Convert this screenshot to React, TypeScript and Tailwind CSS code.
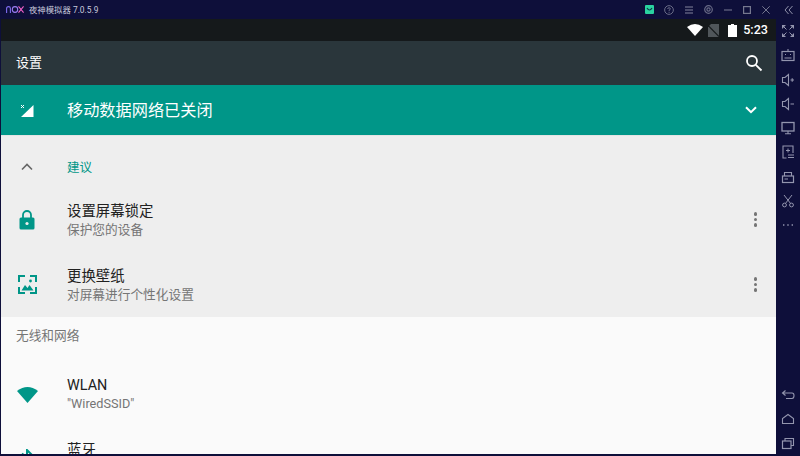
import React from "react";

const CJK = "font-['Roboto','Noto_Sans_CJK_SC',sans-serif]";

function S({ children, size = 14, vb = 14 }: { children: React.ReactNode; size?: number; vb?: number }) {
  return (
    <svg width={size} height={size} viewBox={`0 0 ${vb} ${vb}`} fill="none" stroke="#9395ae" strokeWidth="1.2">
      {children}
    </svg>
  );
}

function TitleIcons() {
  return (
    <div className="flex items-center h-full">
      <div className="w-[19.4px] flex justify-center">
        <svg width="9" height="9" viewBox="0 0 9 9">
          <rect width="9" height="9" rx="1" fill="#2ad2a0" />
          <path d="M2 3 Q4.5 7 7 3" stroke="#0f3a4a" strokeWidth="1.2" fill="none" />
        </svg>
      </div>
      <div className="w-[19.4px] flex justify-center">
        <S size={10} vb={11}>
          <circle cx="5.5" cy="5.5" r="4.8" strokeWidth="1" stroke="#74768f" />
          <path d="M4 4.4 Q4.2 3 5.6 3 Q7 3.2 7 4.3 Q7 5 5.6 5.8 V6.8 M5.6 7.6 V8.6" strokeWidth="1" stroke="#74768f" />
        </S>
      </div>
      <div className="w-[19.4px] flex justify-center">
        <S size={8} vb={8}>
          <path d="M0 1 H8 M0 4 H8 M0 7 H8" strokeWidth="1.3" stroke="#5c5e7c" />
        </S>
      </div>
      <div className="w-[19.4px] flex justify-center">
        <S size={9} vb={9}>
          <circle cx="4.5" cy="4.5" r="3.8" strokeWidth="1.2" stroke="#686a86" />
          <circle cx="4.5" cy="4.5" r="1.6" strokeWidth="1.2" stroke="#686a86" />
        </S>
      </div>
      <div className="w-[19.4px] flex justify-center">
        <S size={8} vb={8}>
          <path d="M0 4 H8" strokeWidth="1.4" stroke="#5c5e7c" />
        </S>
      </div>
      <div className="w-[19.4px] flex justify-center">
        <S size={8} vb={8}>
          <rect x="0.6" y="0.6" width="6.8" height="6.8" strokeWidth="1.2" stroke="#76788f" />
        </S>
      </div>
      <div className="w-[19.4px] flex justify-center">
        <S size={8} vb={8}>
          <path d="M0.3 0.3 L7.7 7.7 M7.7 0.3 L0.3 7.7" strokeWidth="1" stroke="#74768f" />
        </S>
      </div>
      <div className="w-[22px] ml-[2px] flex justify-center">
        <S size={10} vb={10}>
          <path d="M4.5 1 L1 5 L4.5 9 M8.5 1 L5 5 L8.5 9" strokeWidth="1" stroke="#8f91aa" />
        </S>
      </div>
    </div>
  );
}

const sideIcons: React.ReactNode[] = [
  <>
    <path d="M1 1 H5 L1 5 Z M13 1 H9 L13 5 Z M1 13 H5 L1 9 Z M13 13 H9 L13 9 Z" fill="#9395ae" stroke="none" />
    <path d="M3 3 L5.5 5.5 M11 3 L8.5 5.5 M3 11 L5.5 8.5 M11 11 L8.5 8.5" strokeWidth="1" />
  </>,
  <>
    <rect x="1" y="3.5" width="12" height="9" strokeWidth="1.2" />
    <path d="M7 1 V3.5 M3.5 10 H10.5 M4 6.5 H5 M9 6.5 H10" strokeWidth="1.1" />
  </>,
  <path d="M1.5 4.5 H4 L7.5 1.5 V12.5 L4 9.5 H1.5 Z M9.5 7 H13 M11.2 5.2 V8.8" strokeWidth="1.1" />,
  <path d="M1.5 4.5 H4 L7.5 1.5 V12.5 L4 9.5 H1.5 Z M9.5 7 H13" strokeWidth="1.1" />,
  <>
    <rect x="1" y="1.5" width="12" height="8.5" strokeWidth="1.3" />
    <path d="M7 10 V12.5 M4 12.7 H10" strokeWidth="1.1" />
  </>,
  <>
    <path d="M5.5 13 H2 V1 H12 V8" strokeWidth="1.1" />
    <path d="M7 3.5 V7.5 M5 5.5 H9 M7 10 H13 M7 12.5 H13" strokeWidth="1" />
  </>,
  <>
    <rect x="1.5" y="6" width="11" height="6.5" strokeWidth="1.2" />
    <path d="M3.5 6 V2.5 H10.5 V6 M3.5 9 H7" strokeWidth="1.1" />
  </>,
  <>
    <circle cx="3.5" cy="11" r="1.9" strokeWidth="1" />
    <circle cx="10.5" cy="11" r="1.9" strokeWidth="1" />
    <path d="M4.5 9.4 L11 1 M9.5 9.4 L3 1" strokeWidth="1" />
  </>,
  <path d="M2 7 H3.4 M6.3 7 H7.7 M10.6 7 H12" strokeWidth="1.4" />,
];

const navIcons: React.ReactNode[] = [
  <path d="M4.5 2.5 L1.5 5 L4.5 7.5 M1.5 5 H11 Q13 5 13 7.5 Q13 10.5 11 10.5 H5" strokeWidth="1.1" />,
  <path d="M1.5 11.5 V6.5 L7 2.5 L12.5 6.5 V11.5 Z" strokeWidth="1.1" />,
  <>
    <rect x="1.5" y="5" width="8.5" height="7.5" strokeWidth="1.2" />
    <path d="M4 5 V2.5 H12.5 V9.5 H10" strokeWidth="1.1" />
  </>,
];

function Sidebar() {
  return (
    <div className="w-[24px] flex flex-col justify-between pb-[1px]">
      <div className="flex flex-col">
        {sideIcons.map((p, i) => (
          <div key={i} className="h-[24.25px] flex items-center justify-center">
            <S>{p}</S>
          </div>
        ))}
      </div>
      <div className="flex flex-col">
        {navIcons.map((p, i) => (
          <div key={i} className="h-[24px] flex items-center justify-center">
            <S>{p}</S>
          </div>
        ))}
      </div>
    </div>
  );
}

function Dots() {
  return (
    <div className="w-[3.5px] flex flex-col gap-[2px] mr-[19px]">
      <span className="h-[3.5px] rounded-full bg-[#757575]" />
      <span className="h-[3.5px] rounded-full bg-[#757575]" />
      <span className="h-[3.5px] rounded-full bg-[#757575]" />
    </div>
  );
}

function Row({
  icon,
  title,
  sub,
  dots,
  h = "h-[65px]",
}: {
  icon: React.ReactNode;
  title: string;
  sub?: string;
  dots?: boolean;
  h?: string;
}) {
  return (
    <div className={`${h} flex items-center shrink-0`}>
      <div className="w-[66px] pl-[15px] shrink-0 flex items-center">{icon}</div>
      <div className="flex-1 flex flex-col">
        <span className="text-[14.4px] leading-[19px] text-[#212121]">{title}</span>
        {sub && <span className="text-[12.7px] leading-[17px] text-[#757575]">{sub}</span>}
      </div>
      {dots && <Dots />}
    </div>
  );
}

export default function App() {
  return (
    <div className={`w-[800px] h-[456px] bg-[#0e0f3a] flex flex-col overflow-hidden ${CJK}`}>
      <div className="h-[19px] flex items-center justify-between shrink-0">
        <div className="flex items-center">
          <svg className="ml-[6px]" width="18" height="7" viewBox="0 0 18 7" fill="none" strokeWidth="1.1">
            <path d="M0.6 7 V2.5 Q0.6 0.6 2.5 0.6 Q4.4 0.6 4.4 2.5 V7" stroke="#7f6cf0" />
            <ellipse cx="9" cy="3.5" rx="2.7" ry="2.9" stroke="#9a7cf0" />
            <path d="M12.5 0.4 L17.6 6.6 M17.6 0.4 L12.5 6.6" stroke="#f060c8" />
          </svg>
          <span className="ml-[5px] mt-[1px] text-[8.4px] leading-none text-[#c8c9dc]">夜神模拟器 7.0.5.9</span>
        </div>
        <TitleIcons />
      </div>
      <div className="flex-1 flex min-h-0">
        <div className="ml-[1px] mb-[2px] w-[775px] flex flex-col overflow-hidden bg-[#fafafa]">
          <div className="h-[22px] shrink-0 bg-[#15191b] flex items-center justify-end pr-[8px]">
            <svg width="16" height="12" viewBox="0 0 16 12" className="mr-[5px]">
              <path d="M0 3 Q8 -3 16 3 L8 12 Z" fill="#fff" />
            </svg>
            <svg width="11" height="13" viewBox="0 0 11 13" className="mr-[9px]">
              <path d="M3 0 H11 V13 H0 V3 Z" fill="#50565a" />
              <path d="M0 1.5 L11 12.5" stroke="#15191b" strokeWidth="1.2" />
            </svg>
            <svg width="9" height="13" viewBox="0 0 9 13" className="mr-[6px]">
              <path d="M3 0 H6 V1 H9 V13 H0 V1 H3 Z" fill="#fff" />
            </svg>
            <span className="text-[12.6px] font-medium leading-none text-white">5:23</span>
          </div>
          <div className="h-[44px] shrink-0 bg-[#2a363b] flex items-center justify-between pl-[15px] pr-[13px]">
            <span className="text-[13px] text-white">设置</span>
            <svg width="18" height="18" viewBox="0 0 18 18" fill="none" stroke="#fff" strokeWidth="1.8">
              <circle cx="7" cy="7" r="5" />
              <path d="M10.8 10.8 L16.5 16.5" />
            </svg>
          </div>
          <div className="h-[50px] shrink-0 bg-[#009688] flex items-center">
            <div className="w-[66px] pl-[19px] shrink-0 pt-[1px]">
              <svg width="14" height="14" viewBox="0 0 14 14">
                <path d="M13.5 1 V13 H1 Z" fill="#fff" />
                <path d="M1 1 L4 4 M4 1 L1 4" stroke="#fff" strokeWidth="1" />
              </svg>
            </div>
            <span className="flex-1 pt-[3px] text-[16.2px] text-white">移动数据网络已关闭</span>
            <svg width="12" height="8" viewBox="0 0 12 8" fill="none" stroke="#fff" strokeWidth="2" className="mr-[19px]">
              <path d="M1 1.2 L6 6.2 L11 1.2" />
            </svg>
          </div>
          <div className="h-[182px] shrink-0 bg-[#eeeeee] flex flex-col border-t border-[#e4e4e4]">
            <div className="h-[51px] shrink-0 flex items-center pt-[10px]">
              <div className="w-[66px] pl-[20px] shrink-0">
                <svg width="12" height="8" viewBox="0 0 12 8" fill="none" stroke="#666" strokeWidth="1.6">
                  <path d="M1 6.5 L6 1.5 L11 6.5" />
                </svg>
              </div>
              <span className="pt-[3px] text-[12.5px] text-[#009688]">建议</span>
            </div>
            <Row
              icon={
                <svg width="16" height="20" viewBox="0 0 16 20" className="ml-[3px]">
                  <path d="M4 8 V5 A4 4 0 0 1 12 5 V8" fill="none" stroke="#009688" strokeWidth="1.8" />
                  <rect x="0.5" y="7.5" width="15" height="12" rx="1.5" fill="#009688" />
                  <circle cx="8" cy="13.5" r="1.6" fill="#eee" />
                </svg>
              }
              title="设置屏幕锁定"
              sub="保护您的设备"
              dots
            />
            <Row
              icon={
                <svg width="19" height="19" viewBox="0 0 19 19" fill="none" className="ml-[2px]">
                  <path d="M1 7 V1 H7 M12 1 H18 V7 M1 12 V18 H7 M12 18 H18 V12" stroke="#009688" strokeWidth="2" />
                  <path d="M3.5 15.5 L7 10 L9.5 13 L11.5 10 L15.5 15.5 Z" fill="#009688" />
                  <circle cx="12.5" cy="6" r="1.4" fill="#009688" />
                </svg>
              }
              title="更换壁纸"
              sub="对屏幕进行个性化设置"
              dots
            />
          </div>
          <div className="h-[38px] shrink-0 flex items-center pl-[15px] text-[12.7px] text-[#757575]">无线和网络</div>
          <Row
            h="h-[78px]"
            icon={
              <svg width="21" height="17" viewBox="0 0 21 17" className="ml-[1px]">
                <path d="M0 5 Q10.5 -3 21 5 L10.5 17 Z" fill="#009688" />
              </svg>
            }
            title="WLAN"
            sub={'"WiredSSID"'}
          />
          <div className="h-[38px] shrink-0 flex pt-[8px]">
            <div className="w-[66px] pl-[20px] shrink-0 pt-[8px]">
              <svg width="12" height="20" viewBox="0 0 12 20" fill="none" stroke="#009688" strokeWidth="2">
                <path d="M1 4.5 L10 13 L6 17 V1 L10 5 L1 13" />
              </svg>
            </div>
            <span className="text-[14.4px] leading-[19px] text-[#212121]">蓝牙</span>
          </div>
        </div>
        <Sidebar />
      </div>
    </div>
  );
}
